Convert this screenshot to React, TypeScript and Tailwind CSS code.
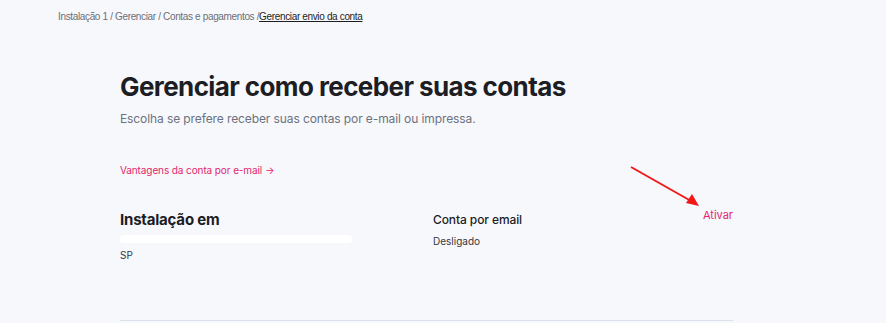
const App = () => {
  return (
    <div className="min-h-[323px] w-full bg-[#f7f8fc] font-['Inter',sans-serif] text-[#1d1d24]">
      <div className="pl-[58px] pt-[9px] font-['Liberation_Sans',sans-serif] text-[10px] tracking-[-0.35px] text-[#6b6f76]">
        Instalação 1 / Gerenciar / Contas e pagamentos /
        <span className="text-[#1d1d24] underline">Gerenciar envio da conta</span>
      </div>

      <div className="ml-[120px] w-[613px]">
        <h1 className="mt-[46px] text-[26px] font-bold leading-[34px] tracking-[-0.6px]">
          Gerenciar como receber suas contas
        </h1>
        <p className="mt-[6px] text-[12px] tracking-[-0.1px] text-[#6b7280]">
          Escolha se prefere receber suas contas por e-mail ou impressa.
        </p>

        <a className="mt-[35px] block text-[10px] tracking-[-0.1px] text-[#e3266e]">
          Vantagens da conta por e-mail →
        </a>

        <div className="mt-[32px] flex">
          <div className="w-[313px]">
            <div className="text-[15px] font-bold leading-[20px] tracking-[-0.2px]">Instalação em</div>
            <div className="mt-[5px] h-[8px] w-[232px] rounded-sm bg-white" />
            <div className="mt-[5px] text-[10px] text-[#34373d]">SP</div>
          </div>
          <div className="flex-1">
            <div className="text-[12px] font-medium leading-[20px] tracking-[-0.1px]">Conta por email</div>
            <div className="mt-[4px] text-[10px] text-[#34373d]">Desligado</div>
          </div>
          <div className="relative mt-[-3px] text-[11px] text-[#e3266e]">
            Ativar
            <svg
              className="absolute left-[-74px] top-[-44px]"
              width="72"
              height="46"
              viewBox="0 0 72 46"
            >
              <line x1="2" y1="4" x2="62" y2="38" stroke="#f21818" strokeWidth="2" />
              <polygon points="70,43 57,40 63,31" fill="#f21818" />
            </svg>
          </div>
        </div>

        <div className="mt-[57px] h-px w-full bg-[#dbe1ea]" />
      </div>
    </div>
  );
};

export default App;
